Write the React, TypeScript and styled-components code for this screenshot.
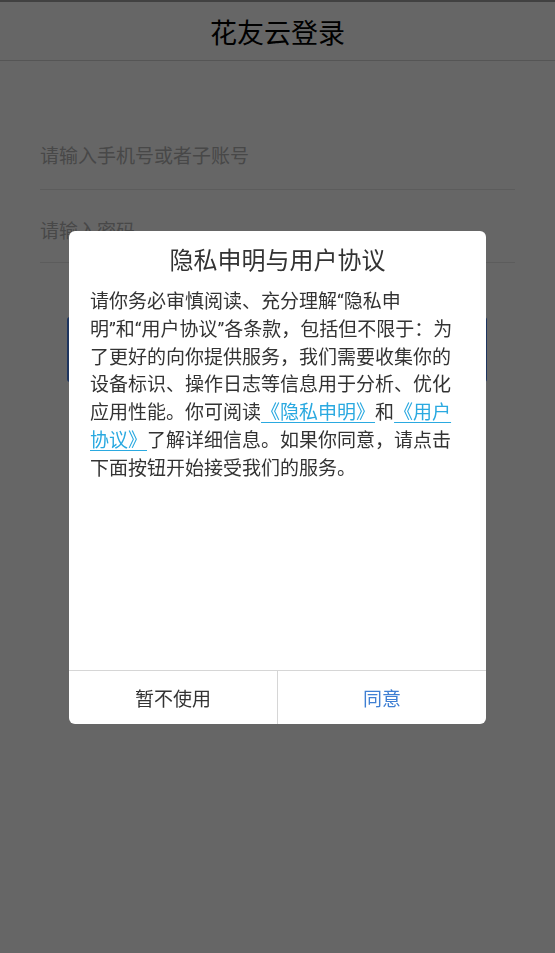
import React from "react";
import styled, { createGlobalStyle } from "styled-components";

const GlobalStyle = createGlobalStyle`
  html, body {
    margin: 0;
    padding: 0;
    height: 100%;
    background: #ffffff;
  }
  body {
    font-family: Roboto, "Noto Sans CJK SC", sans-serif;
  }
  #root {
    height: 100%;
  }
`;

function App() {
  return (
    <Page>
      <GlobalStyle />
      <StatusStrip />
      <Header>
        <Title>花友云登录</Title>
      </Header>

      <Form>
        <InputRow>
          <Field placeholder="请输入手机号或者子账号" />
        </InputRow>
        <InputRow>
          <Field type="password" placeholder="请输入密码" />
        </InputRow>
        <LoginButton>登录</LoginButton>
      </Form>

      {/* 隐私协议弹窗 */}
      <Overlay>
        <Dialog>
          <DialogTitle>隐私申明与用户协议</DialogTitle>
          <DialogBody>
            请你务必审慎阅读、充分理解“隐私申
            <br />
            明”和“用户协议”各条款，包括但不限于：为了更好的向你提供服务，我们需要收集你的设备标识、操作日志等信息用于分析、优化应用性能。你可阅读
            <Link href="#">《隐私申明》</Link>和<Link href="#">《用户协议》</Link>
            了解详细信息。如果你同意，请点击下面按钮开始接受我们的服务。
          </DialogBody>
          <DialogActions>
            <ActionButton>暂不使用</ActionButton>
            <ActionButton primary>同意</ActionButton>
          </DialogActions>
        </Dialog>
      </Overlay>
    </Page>
  );
}

export default App;

const Page = styled.div`
  height: 100%;
  display: flex;
  flex-direction: column;
  background: #ffffff;
`;

const StatusStrip = styled.div`
  height: 2px;
  background: #a2a2a2;
  flex-shrink: 0;
`;

const Header = styled.header`
  height: 58px;
  display: flex;
  align-items: center;
  justify-content: center;
  border-bottom: 1px solid #d4d4d4;
  flex-shrink: 0;
`;

const Title = styled.h1`
  margin: 0;
  font-size: 27px;
  font-weight: 400;
  color: #000;
`;

const Form = styled.div`
  display: flex;
  flex-direction: column;
  padding: 56px 40px 0;
`;

const InputRow = styled.div`
  display: flex;
  align-items: center;
  padding: 28px 0 20px;
  border-bottom: 1px solid #e6e6e6;

  & + & {
    padding: 30px 0 18px;
  }
`;

const Field = styled.input`
  flex: 1;
  border: none;
  outline: none;
  padding: 0;
  margin: 0;
  height: 24px;
  line-height: 24px;
  font-family: inherit;
  font-size: 19px;
  color: #333;
  background: transparent;

  &::placeholder {
    color: #b3b3b3;
  }
`;

const LoginButton = styled.button`
  margin: 54px 28px 0 27px;
  height: 65px;
  border: none;
  border-radius: 3px;
  background: #4c86ee;
  color: #fff;
  font-family: inherit;
  font-size: 20px;
`;

const Overlay = styled.div`
  position: fixed;
  inset: 0;
  background: rgba(0, 0, 0, 0.6);
  display: flex;
  align-items: center;
  justify-content: center;
`;

const Dialog = styled.div`
  width: 417px;
  height: 493px;
  background: #ffffff;
  border-radius: 6px;
  display: flex;
  flex-direction: column;
  overflow: hidden;
  margin-top: 2px;
`;

const DialogTitle = styled.div`
  padding-top: 14px;
  line-height: 32px;
  font-size: 24px;
  color: #333;
  text-align: center;
`;

const DialogBody = styled.div`
  flex: 1;
  padding: 11px 21px 0;
  font-size: 19px;
  line-height: 27.8px;
  color: #333;
`;

const Link = styled.a`
  color: #2aa9e0;
  text-decoration: underline;
  text-underline-offset: 3px;
`;

const DialogActions = styled.div`
  height: 53px;
  display: flex;
  border-top: 1px solid #d6d6d6;
  flex-shrink: 0;
`;

const ActionButton = styled.button<{ primary?: boolean }>`
  flex: 1;
  border: none;
  background: transparent;
  font-family: inherit;
  font-size: 19px;
  color: ${(p) => (p.primary ? "#3f7fd3" : "#333")};
  padding: 0;

  & + & {
    border-left: 1px solid #d6d6d6;
  }
`;
